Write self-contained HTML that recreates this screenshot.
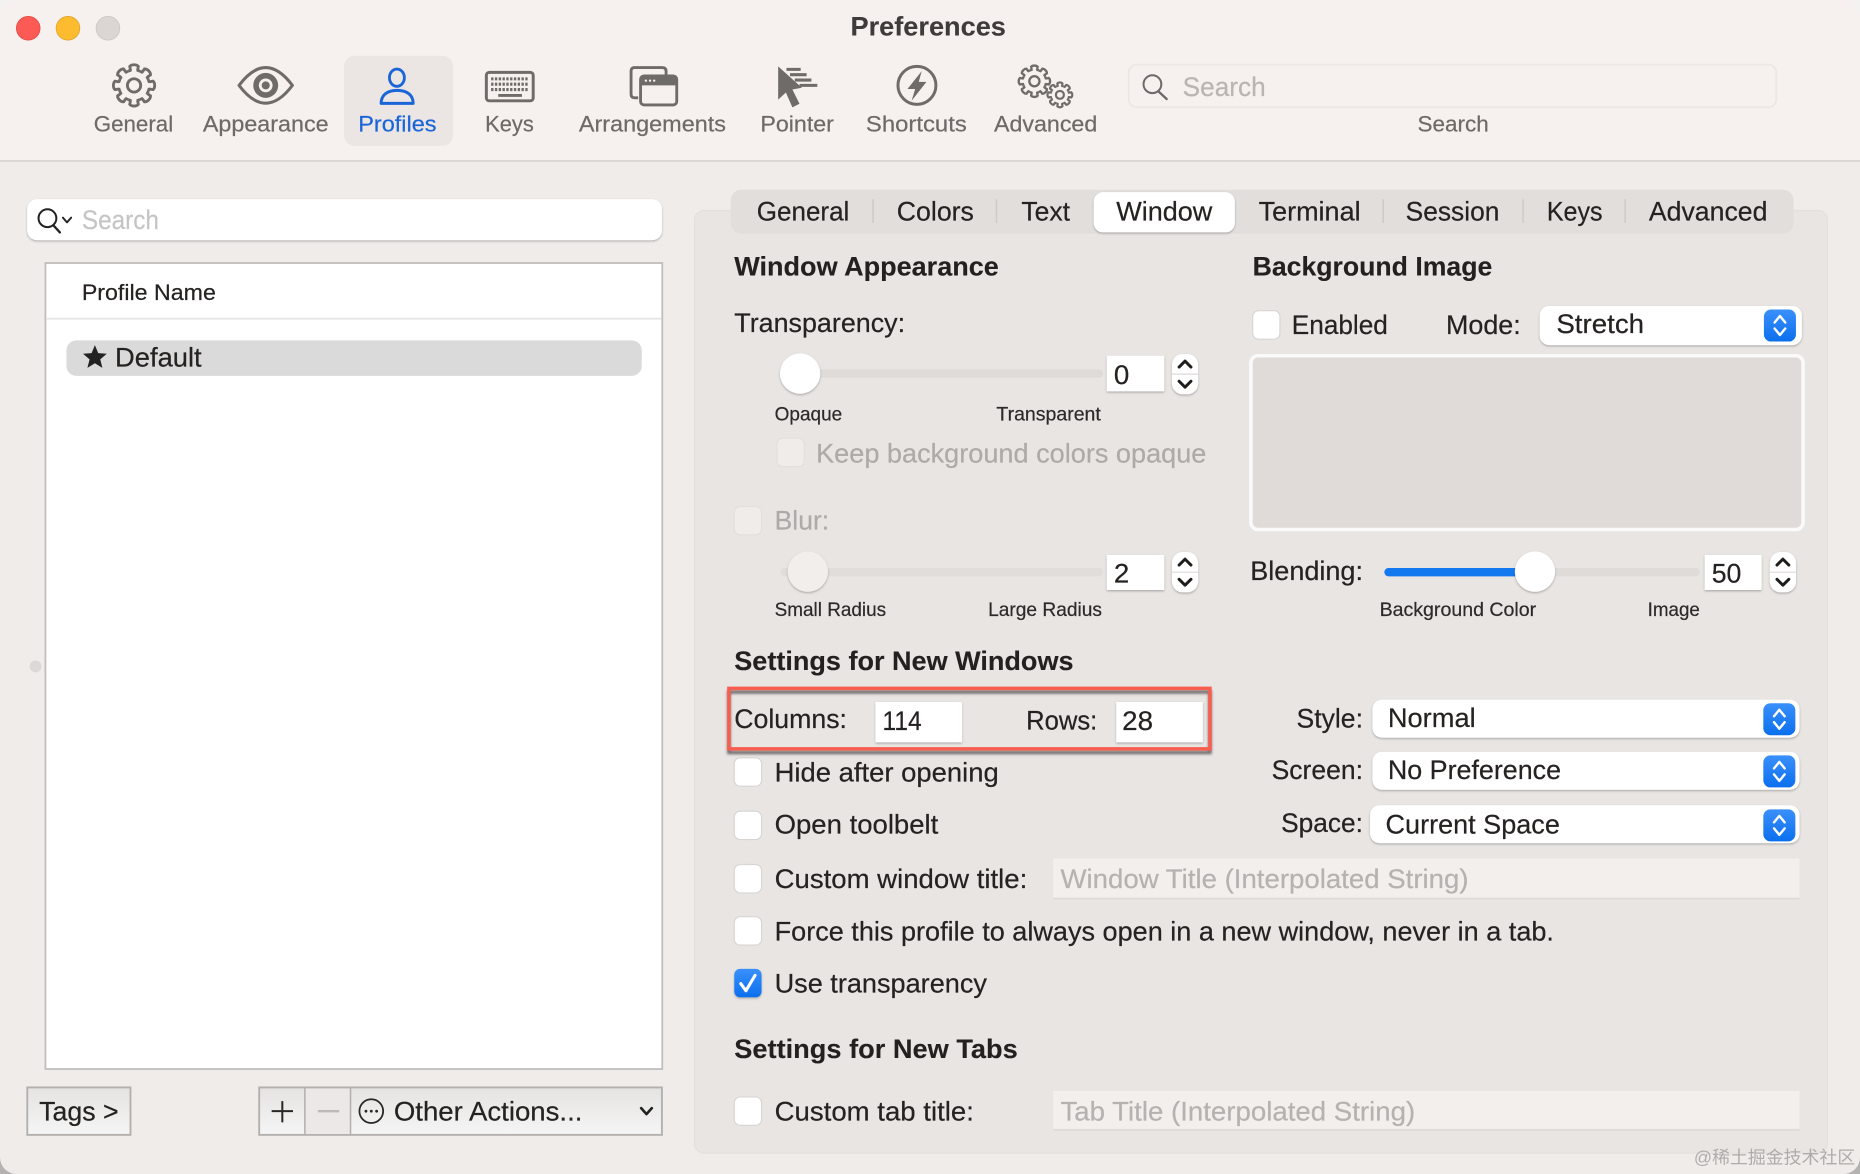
<!DOCTYPE html>
<html><head><meta charset="utf-8"><title>Preferences</title>
<style>
html,body{margin:0;padding:0;background:#f3f1f0;width:1860px;height:1174px;overflow:hidden}
svg{display:block}
text{font-family:"Liberation Sans","Noto Sans CJK SC",sans-serif;fill:#252221;font-size:22.5px;stroke:#252221;stroke-width:.18px}
.tb{font-size:19px;fill:#6e6a68;stroke:#6e6a68}
.b{font-weight:bold;font-size:23px;fill:#232020;stroke:#232020;stroke-width:.1px}
.sm{font-size:16px;fill:#2d2a29;stroke:#2d2a29}
.dis{fill:#aeaaa8;stroke:#aeaaa8}
.ph{fill:#b5b2b0;stroke:#b5b2b0}
</style></head><body>
<svg width="1860" height="1174" viewBox="0 0 1568 990" preserveAspectRatio="none" lang="en">
<defs>
<linearGradient id="btn" x1="0" y1="0" x2="0" y2="1"><stop offset="0" stop-color="#e4e3e2"/><stop offset="1" stop-color="#f6f5f5"/></linearGradient>
<linearGradient id="blue" x1="0" y1="0" x2="0" y2="1"><stop offset="0" stop-color="#3a90fb"/><stop offset="1" stop-color="#0b6fee"/></linearGradient>
<filter id="sh" x="-20%" y="-20%" width="140%" height="150%"><feDropShadow dx="0" dy="1" stdDeviation="1" flood-color="#000" flood-opacity=".28"/></filter>
<filter id="bl" x="-5%" y="-20%" width="110%" height="150%"><feGaussianBlur stdDeviation="1.100"/></filter>
<path id="gs" d="M12.01 -4.97L12.61 -3.15Q13.5 -3 14.4 -3.3L16 -3.6Q17.4 -2.5 17.4 0Q17.4 2.5 16 3.6L14.4 3.3Q13.5 3 12.61 3.15L12.01 4.97" fill="none"/>
<g id="gear" fill="none">
<use href="#gs"/><use href="#gs" transform="rotate(45)"/><use href="#gs" transform="rotate(90)"/><use href="#gs" transform="rotate(135)"/><use href="#gs" transform="rotate(180)"/><use href="#gs" transform="rotate(225)"/><use href="#gs" transform="rotate(270)"/><use href="#gs" transform="rotate(315)"/>
<circle r="5.6"/>
</g>
<g id="pop"><rect x="-13.5" y="-13.5" width="27" height="27" rx="6" fill="url(#blue)"/><path d="M-4.500-2.500L0-8L4.500-2.500M-4.500 2.500L0 8L4.500 2.500" fill="none" stroke="#fff" stroke-width="2" stroke-linecap="round" stroke-linejoin="round"/></g>
<g id="step"><rect x="-11" y="-17" width="22" height="34" rx="9" fill="#fff" filter="url(#sh)"/><path d="M-11 0H11" stroke="#dedad8" stroke-width="1"/><path d="M-5-6L0-11L5-6M-5 6L0 11L5 6" fill="none" stroke="#1f1d1c" stroke-width="2.500" stroke-linecap="round" stroke-linejoin="round"/></g>
<rect id="cb" width="23" height="24" rx="5" fill="#fff" stroke="#d9d5d3" stroke-width="1"/>
<rect id="cbd" width="23" height="24" rx="5" fill="#efecea" stroke="#e3dfdd" stroke-width="1"/>
</defs>

<!-- outer -->
<rect width="1568" height="495" fill="#f4f2f1"/>
<rect y="495" width="1568" height="495" fill="#b5b3b2"/>
<rect x="0" y="0" width="1568" height="990" rx="14" fill="#f0ecea"/>
<path d="M0 135V14A14 14 0 0 1 14 0H1554A14 14 0 0 1 1568 14V135Z" fill="#f6f0ee"/>
<rect x="0" y="135" width="1568" height="1.500" fill="#d9d5d3"/>

<!-- traffic lights -->
<circle cx="23.800" cy="23.800" r="10" fill="#fc5b55" stroke="#e2463f" stroke-width=".6"/>
<circle cx="57.300" cy="23.800" r="10" fill="#fdbb2f" stroke="#dfa023" stroke-width=".6"/>
<circle cx="91" cy="23.800" r="10" fill="#dbd6d4" stroke="#c9c4c2" stroke-width=".6"/>
<text x="717" y="30" class="b" textLength="131" lengthAdjust="spacingAndGlyphs" style="fill:#3f3b3a;stroke:#3f3b3a">Preferences</text>

<!-- toolbar selected -->
<rect x="290" y="47" width="92" height="76" rx="9" fill="#ebe5e3"/>

<!-- gear general -->
<g transform="translate(113,72)" stroke="#6f6b69" stroke-width="2.400"><use href="#gear"/></g>
<!-- eye -->
<path d="M201.500 72Q224 42 246.500 72Q224 102 201.500 72Z" fill="none" stroke="#6f6b69" stroke-width="2.600" stroke-linejoin="round"/>
<circle cx="224" cy="72" r="10.500" fill="#6f6b69"/><circle cx="224" cy="72" r="5.800" fill="#f6f0ee"/><circle cx="224" cy="72" r="3.400" fill="#6f6b69"/>
<!-- person -->
<ellipse cx="334.600" cy="65.500" rx="6.300" ry="7.300" fill="none" stroke="#1a66d9" stroke-width="2.400"/>
<path d="M321.300 87.200H348.300C348.300 80 343 76.200 334.800 76.200C326.600 76.200 321.300 80 321.300 87.200Z" fill="none" stroke="#1a66d9" stroke-width="2.500" stroke-linejoin="round"/>
<!-- keyboard -->
<rect x="410" y="61" width="39.500" height="24" rx="2.500" fill="none" stroke="#6f6b69" stroke-width="2.500"/>
<path d="M414 66.500H446M414 71H446M414 75.500H446" stroke="#6f6b69" stroke-width="2.600" stroke-dasharray="2 1.200" fill="none"/>
<path d="M420 80.500H440" stroke="#6f6b69" stroke-width="2.400"/>
<!-- arrangements -->
<path d="M538 82.500H535Q532 82.500 532 79.500V60Q532 57 535 57H558Q561.500 57 561.500 60V63" fill="none" stroke="#6f6b69" stroke-width="2.400"/>
<rect x="540" y="64" width="30.500" height="24.500" rx="3" fill="none" stroke="#6f6b69" stroke-width="2.400"/>
<path d="M540 72V67Q540 64 543 64H567.500Q570.500 64 570.500 67V72Z" fill="#6f6b69"/>
<circle cx="544.500" cy="68" r="1" fill="#f6f0ee"/><circle cx="548" cy="68" r="1" fill="#f6f0ee"/><circle cx="551.500" cy="68" r="1" fill="#f6f0ee"/>
<!-- pointer -->
<path d="M656 56L676 74L668 75.500L674 87.500L668 90.500L662.500 78L656 84Z" fill="#6f6b69"/>
<path d="M663 58.500H675M666 63H680M670 67.500H684M674 72H689" stroke="#6f6b69" stroke-width="2.600" fill="none"/>
<!-- shortcuts -->
<circle cx="773" cy="72" r="16" fill="none" stroke="#6f6b69" stroke-width="2.500"/>
<path d="M777 60L765 75H771.500L768.500 85L781 69H774.500Z" fill="#6f6b69"/>
<!-- advanced gears -->
<g transform="translate(872,68.500) scale(.76)" stroke="#6f6b69" stroke-width="2.600"><use href="#gear"/></g>
<g transform="translate(893.500,80) scale(.6)" stroke="#6f6b69" stroke-width="3"><use href="#gear"/></g>

<text x="79" y="111" class="tb" textLength="67" lengthAdjust="spacingAndGlyphs">General</text>
<text x="171" y="111" class="tb" textLength="106" lengthAdjust="spacingAndGlyphs">Appearance</text>
<text x="302" y="111" class="tb" textLength="66" lengthAdjust="spacingAndGlyphs" style="fill:#1a66d9;stroke:#1a66d9">Profiles</text>
<text x="409" y="111" class="tb" textLength="41" lengthAdjust="spacingAndGlyphs">Keys</text>
<text x="488" y="111" class="tb" textLength="124" lengthAdjust="spacingAndGlyphs">Arrangements</text>
<text x="641" y="111" class="tb" textLength="62" lengthAdjust="spacingAndGlyphs">Pointer</text>
<text x="730" y="111" class="tb" textLength="85" lengthAdjust="spacingAndGlyphs">Shortcuts</text>
<text x="838" y="111" class="tb" textLength="87" lengthAdjust="spacingAndGlyphs">Advanced</text>
<text x="1195" y="111" class="tb" textLength="60" lengthAdjust="spacingAndGlyphs">Search</text>

<!-- toolbar search -->
<rect x="951.500" y="54.500" width="546" height="36" rx="7" fill="#f6f0ee" stroke="#ece6e4" stroke-width="1.500"/>
<circle cx="971.500" cy="71" r="7.500" fill="none" stroke="#6d6968" stroke-width="1.700"/>
<path d="M976.500 77L983.500 83.500" stroke="#6d6968" stroke-width="2" stroke-linecap="round"/>
<text x="997" y="81" textLength="70" lengthAdjust="spacingAndGlyphs" style="fill:#b9b5b3;stroke:#b9b5b3">Search</text>

<!-- left search -->
<rect x="23" y="168" width="535" height="34.500" rx="8" fill="#fff" filter="url(#sh)"/>
<circle cx="40" cy="184" r="7.500" fill="none" stroke="#222" stroke-width="1.700"/>
<path d="M45 190L50.500 196" stroke="#222" stroke-width="1.900" stroke-linecap="round"/>
<path d="M53 183.500L56.500 187.500L60 183.500" fill="none" stroke="#222" stroke-width="1.600" stroke-linecap="round" stroke-linejoin="round"/>
<text x="69" y="193" textLength="65" lengthAdjust="spacingAndGlyphs" style="fill:#c6c5c5;stroke:#c6c5c5">Search</text>

<!-- table -->
<rect x="38.300" y="221.800" width="520" height="679.700" fill="#fff" stroke="#c0bdbb" stroke-width="1.500"/>
<rect x="39.500" y="268" width="518" height="1.500" fill="#e6e5e5"/>
<text x="69" y="253" textLength="113" lengthAdjust="spacingAndGlyphs" style="font-size:19px">Profile Name</text>
<rect x="56" y="287" width="485" height="30" rx="8.500" fill="#dadada"/>
<path d="M80 291L82.800 297.800L90 298.300L84.500 303L86.300 310.200L80 306.300L73.700 310.200L75.500 303L70 298.300L77.200 297.800Z" fill="#222"/>
<text x="97" y="309" textLength="73" lengthAdjust="spacingAndGlyphs">Default</text>

<circle cx="30" cy="562" r="5" fill="#dcd8d6"/>

<!-- bottom buttons -->
<rect x="23" y="917" width="87" height="40" fill="url(#btn)" stroke="#b3b0ae" stroke-width="1.600"/>
<text x="33" y="945" textLength="67" lengthAdjust="spacingAndGlyphs">Tags &gt;</text>
<rect x="218.500" y="917" width="339.500" height="40" fill="url(#btn)" stroke="#b3b0ae" stroke-width="1.600"/>
<rect x="257.500" y="918" width="38" height="38" fill="#ebe8e7"/>
<path d="M257 917V957M295.500 917V957" stroke="#b3b0ae" stroke-width="1.300"/>
<path d="M238 928.500V946.500M229 937H247" stroke="#2a2827" stroke-width="1.700"/>
<path d="M268 937H286" stroke="#bdb9b7" stroke-width="2"/>
<circle cx="313" cy="937" r="10" fill="none" stroke="#2a2827" stroke-width="1.500"/>
<circle cx="308.500" cy="937" r="1.200" fill="#2a2827"/><circle cx="313" cy="937" r="1.200" fill="#2a2827"/><circle cx="317.500" cy="937" r="1.200" fill="#2a2827"/>
<text x="332" y="945" textLength="159" lengthAdjust="spacingAndGlyphs">Other Actions...</text>
<path d="M540.500 934.500L545 939.500L549.500 934.500" fill="none" stroke="#222" stroke-width="2.200" stroke-linecap="round" stroke-linejoin="round"/>

<!-- panel -->
<rect x="585.500" y="177.500" width="955" height="795" rx="8" fill="#e9e5e3" stroke="#e4e0de"/>
<rect x="616" y="160" width="896" height="37" rx="9" fill="#e2dedc"/>
<rect x="922" y="162" width="119" height="34" rx="8" fill="#fff" filter="url(#sh)"/>
<path d="M736 168V188M840 168V188M1166 168V188M1284 168V188M1370 168V188" stroke="#cfcbc9" stroke-width="1.300"/>
<text x="638" y="186" textLength="78" lengthAdjust="spacingAndGlyphs">General</text>
<text x="756" y="186" textLength="65" lengthAdjust="spacingAndGlyphs">Colors</text>
<text x="861" y="186" textLength="41" lengthAdjust="spacingAndGlyphs">Text</text>
<text x="941" y="186" textLength="81" lengthAdjust="spacingAndGlyphs">Window</text>
<text x="1061" y="186" textLength="86" lengthAdjust="spacingAndGlyphs">Terminal</text>
<text x="1185" y="186" textLength="79" lengthAdjust="spacingAndGlyphs">Session</text>
<text x="1304" y="186" textLength="47" lengthAdjust="spacingAndGlyphs">Keys</text>
<text x="1390" y="186" textLength="100" lengthAdjust="spacingAndGlyphs">Advanced</text>

<!-- Window appearance -->
<text x="619" y="232.500" class="b" textLength="223" lengthAdjust="spacingAndGlyphs">Window Appearance</text>
<text x="619" y="280" textLength="144" lengthAdjust="spacingAndGlyphs">Transparency:</text>
<rect x="660" y="311.500" width="270" height="7" rx="3.500" fill="#dfdbd9"/>
<ellipse cx="674.500" cy="315" rx="17" ry="17" fill="#fff" filter="url(#sh)"/>
<rect x="933" y="300" width="48.500" height="30" fill="#fff" filter="url(#sh)"/>
<text x="939" y="324" textLength="13" lengthAdjust="spacingAndGlyphs">0</text>
<use href="#step" x="999" y="315.500"/>
<text x="653" y="354.500" class="sm" textLength="57" lengthAdjust="spacingAndGlyphs">Opaque</text>
<text x="840" y="354.500" class="sm" textLength="88" lengthAdjust="spacingAndGlyphs">Transparent</text>
<use href="#cbd" x="655" y="369.500"/>
<text x="688" y="390" class="dis" textLength="329" lengthAdjust="spacingAndGlyphs">Keep background colors opaque</text>
<use href="#cbd" x="619" y="427"/>
<text x="653" y="446.500" class="dis" textLength="46" lengthAdjust="spacingAndGlyphs">Blur:</text>
<rect x="658" y="479" width="272" height="7" rx="3.500" fill="#e1dddb"/>
<circle cx="681" cy="482" r="17" fill="#f1eeec" filter="url(#sh)"/>
<rect x="933" y="468" width="48.500" height="29.500" fill="#fff" filter="url(#sh)"/>
<text x="939" y="491" textLength="13" lengthAdjust="spacingAndGlyphs">2</text>
<use href="#step" x="999" y="482.500"/>
<text x="653" y="519.500" class="sm" textLength="94" lengthAdjust="spacingAndGlyphs">Small Radius</text>
<text x="833" y="519.500" class="sm" textLength="96" lengthAdjust="spacingAndGlyphs">Large Radius</text>

<!-- Background image -->
<text x="1056" y="232.500" class="b" textLength="202" lengthAdjust="spacingAndGlyphs">Background Image</text>
<use href="#cb" x="1056" y="262"/>
<text x="1089" y="281.500" textLength="81" lengthAdjust="spacingAndGlyphs">Enabled</text>
<text x="1219" y="281.500" textLength="63" lengthAdjust="spacingAndGlyphs">Mode:</text>
<rect x="1298" y="258" width="221" height="33" rx="8" fill="#fff" filter="url(#sh)"/>
<text x="1312" y="281" textLength="74" lengthAdjust="spacingAndGlyphs">Stretch</text>
<use href="#pop" x="1500.500" y="274.500"/>
<rect x="1054.500" y="300" width="465.500" height="146.500" rx="6" fill="#e0dbd9" stroke="#fbfafa" stroke-width="3"/>
<text x="1054" y="489" textLength="95" lengthAdjust="spacingAndGlyphs">Blending:</text>
<rect x="1167" y="479" width="266" height="7" rx="3.500" fill="#dfdbd9"/>
<path d="M1170.500 479H1294V486H1170.500A3.500 3.500 0 0 1 1170.500 479Z" fill="#1479ee"/>
<ellipse cx="1294" cy="482" rx="17" ry="17" fill="#fff" filter="url(#sh)"/>
<rect x="1437" y="468" width="48" height="29.500" fill="#fff" filter="url(#sh)"/>
<text x="1443" y="491" textLength="25" lengthAdjust="spacingAndGlyphs">50</text>
<use href="#step" x="1503" y="482.500"/>
<text x="1163" y="519.500" class="sm" textLength="132" lengthAdjust="spacingAndGlyphs">Background Color</text>
<text x="1389" y="519.500" class="sm" textLength="44" lengthAdjust="spacingAndGlyphs">Image</text>

<!-- Settings for new windows -->
<text x="619" y="565" class="b" textLength="286" lengthAdjust="spacingAndGlyphs">Settings for New Windows</text>
<rect x="614.500" y="583.500" width="405.500" height="51" fill="none" stroke="#4a4443" stroke-opacity=".75" stroke-width="3" filter="url(#bl)"/>
<rect x="614.500" y="580.500" width="405.500" height="51" fill="none" stroke="#f85e50" stroke-width="3"/>
<text x="619" y="614" textLength="95" lengthAdjust="spacingAndGlyphs">Columns:</text>
<rect x="738" y="592" width="73" height="34" fill="#fff" filter="url(#sh)"/>
<text x="744" y="615.500" textLength="33" lengthAdjust="spacingAndGlyphs">114</text>
<text x="865" y="615" textLength="60" lengthAdjust="spacingAndGlyphs">Rows:</text>
<rect x="941" y="592" width="73" height="34" fill="#fff" filter="url(#sh)"/>
<text x="946" y="615.500" textLength="26" lengthAdjust="spacingAndGlyphs">28</text>

<use href="#cb" x="619" y="639"/>
<text x="653" y="659" textLength="189" lengthAdjust="spacingAndGlyphs">Hide after opening</text>
<use href="#cb" x="619" y="684"/>
<text x="653" y="703" textLength="138" lengthAdjust="spacingAndGlyphs">Open toolbelt</text>
<use href="#cb" x="619" y="729"/>
<text x="653" y="749" textLength="213" lengthAdjust="spacingAndGlyphs">Custom window title:</text>
<rect x="888" y="724" width="629" height="34" fill="#f2efed"/>
<rect x="888" y="757" width="629" height="1.500" fill="#dedad8"/>
<text x="894" y="749" class="ph" textLength="344" lengthAdjust="spacingAndGlyphs">Window Title (Interpolated String)</text>
<use href="#cb" x="619" y="773"/>
<text x="653" y="793" textLength="657" lengthAdjust="spacingAndGlyphs">Force this profile to always open in a new window, never in a tab.</text>
<rect x="619" y="817" width="23" height="24" rx="5" fill="url(#blue)" filter="url(#sh)"/>
<path d="M624.500 829.500L628.800 835.500L636.500 822.500" fill="none" stroke="#fff" stroke-width="2.600" stroke-linecap="round" stroke-linejoin="round"/>
<text x="653" y="837" textLength="179" lengthAdjust="spacingAndGlyphs">Use transparency</text>

<text x="619" y="892" class="b" textLength="239" lengthAdjust="spacingAndGlyphs">Settings for New Tabs</text>
<use href="#cb" x="619" y="925"/>
<text x="653" y="945" textLength="168" lengthAdjust="spacingAndGlyphs">Custom tab title:</text>
<rect x="888" y="920" width="629" height="33" fill="#f2efed"/>
<rect x="888" y="952" width="629" height="1.500" fill="#dedad8"/>
<text x="894" y="945" class="ph" textLength="299" lengthAdjust="spacingAndGlyphs">Tab Title (Interpolated String)</text>

<!-- popups right -->
<text x="1093" y="613.500" textLength="56" lengthAdjust="spacingAndGlyphs">Style:</text>
<rect x="1157" y="590" width="360" height="32" rx="8" fill="#fff" filter="url(#sh)"/>
<text x="1170" y="613" textLength="74" lengthAdjust="spacingAndGlyphs">Normal</text>
<use href="#pop" x="1500" y="606.500"/>
<text x="1072" y="657" textLength="77" lengthAdjust="spacingAndGlyphs">Screen:</text>
<rect x="1157" y="634" width="360" height="32" rx="8" fill="#fff" filter="url(#sh)"/>
<text x="1170" y="657" textLength="146" lengthAdjust="spacingAndGlyphs">No Preference</text>
<use href="#pop" x="1500" y="650.500"/>
<text x="1080" y="701.500" textLength="69" lengthAdjust="spacingAndGlyphs">Space:</text>
<rect x="1155" y="679" width="362" height="32" rx="8" fill="#fff" filter="url(#sh)"/>
<text x="1168" y="703" textLength="147" lengthAdjust="spacingAndGlyphs">Current Space</text>
<use href="#pop" x="1500" y="696"/>

<text x="1428" y="981" textLength="136" lengthAdjust="spacingAndGlyphs" style="font-size:15px;fill:#aeacaa;stroke:none">@稀土掘金技术社区</text>
</svg>
</body></html>
